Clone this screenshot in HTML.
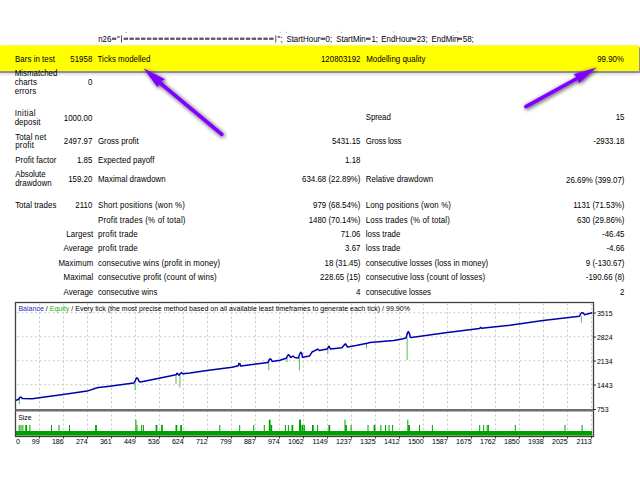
<!DOCTYPE html>
<html><head><meta charset="utf-8"><style>
html,body{margin:0;padding:0;background:#fff;width:640px;height:480px;overflow:hidden}
svg{position:absolute;left:0;top:0;font-family:"Liberation Sans",sans-serif}
</style></head><body>
<svg width="640" height="480" viewBox="0 0 640 480">
<defs>
<filter id="ysh" x="-5%" y="-50%" width="110%" height="200%"><feGaussianBlur in="SourceAlpha" stdDeviation="2" result="b1"/><feOffset in="b1" dx="0.5" dy="1.5" result="o1"/><feComponentTransfer in="o1" result="s1"><feFuncA type="linear" slope="0.3"/></feComponentTransfer><feGaussianBlur in="SourceAlpha" stdDeviation="0.5" result="b2"/><feOffset in="b2" dx="0.9" dy="1.7" result="o2"/><feFlood flood-color="#8e8e9c"/><feComposite in2="o2" operator="in" result="s2"/><feMerge><feMergeNode in="s1"/><feMergeNode in="s2"/><feMergeNode in="SourceGraphic"/></feMerge></filter>
<filter id="sh" x="-50%" y="-50%" width="200%" height="200%"><feGaussianBlur in="SourceAlpha" stdDeviation="2.1"/><feOffset dx="0.6" dy="1.4"/><feComponentTransfer><feFuncA type="linear" slope="0.8"/></feComponentTransfer><feMerge><feMergeNode/><feMergeNode in="SourceGraphic"/></feMerge></filter>
</defs>
<rect x="-2" y="45.4" width="641" height="25.6" fill="#ffff00" filter="url(#ysh)"/>
<rect x="111.90" y="37.6" width="4.40" height="2.3" fill="#5a5a5a"/><rect x="320.60" y="37.6" width="4.70" height="2.3" fill="#5a5a5a"/><rect x="366.00" y="37.6" width="4.60" height="2.3" fill="#5a5a5a"/><rect x="412.00" y="37.6" width="4.25" height="2.3" fill="#5a5a5a"/><rect x="457.30" y="37.6" width="4.70" height="2.3" fill="#5a5a5a"/><rect x="123.65" y="37.6" width="4.40" height="2.3" fill="#5a5a5a"/><rect x="129.47" y="37.6" width="4.40" height="2.3" fill="#5a5a5a"/><rect x="135.29" y="37.6" width="4.40" height="2.3" fill="#5a5a5a"/><rect x="141.11" y="37.6" width="4.40" height="2.3" fill="#5a5a5a"/><rect x="146.93" y="37.6" width="4.40" height="2.3" fill="#5a5a5a"/><rect x="152.75" y="37.6" width="4.40" height="2.3" fill="#5a5a5a"/><rect x="158.57" y="37.6" width="4.40" height="2.3" fill="#5a5a5a"/><rect x="164.39" y="37.6" width="4.40" height="2.3" fill="#5a5a5a"/><rect x="170.21" y="37.6" width="4.40" height="2.3" fill="#5a5a5a"/><rect x="176.03" y="37.6" width="4.40" height="2.3" fill="#5a5a5a"/><rect x="181.85" y="37.6" width="4.40" height="2.3" fill="#5a5a5a"/><rect x="187.67" y="37.6" width="4.40" height="2.3" fill="#5a5a5a"/><rect x="193.49" y="37.6" width="4.40" height="2.3" fill="#5a5a5a"/><rect x="199.31" y="37.6" width="4.40" height="2.3" fill="#5a5a5a"/><rect x="205.13" y="37.6" width="4.40" height="2.3" fill="#5a5a5a"/><rect x="210.95" y="37.6" width="4.40" height="2.3" fill="#5a5a5a"/><rect x="216.77" y="37.6" width="4.40" height="2.3" fill="#5a5a5a"/><rect x="222.59" y="37.6" width="4.40" height="2.3" fill="#5a5a5a"/><rect x="228.41" y="37.6" width="4.40" height="2.3" fill="#5a5a5a"/><rect x="234.23" y="37.6" width="4.40" height="2.3" fill="#5a5a5a"/><rect x="240.05" y="37.6" width="4.40" height="2.3" fill="#5a5a5a"/><rect x="245.87" y="37.6" width="4.40" height="2.3" fill="#5a5a5a"/><rect x="251.69" y="37.6" width="4.40" height="2.3" fill="#5a5a5a"/><rect x="257.51" y="37.6" width="4.40" height="2.3" fill="#5a5a5a"/><rect x="263.33" y="37.6" width="4.40" height="2.3" fill="#5a5a5a"/><rect x="269.15" y="37.6" width="4.40" height="2.3" fill="#5a5a5a"/><rect x="121" y="35.3" width="1" height="7.2" fill="#555"/><rect x="275.3" y="35.3" width="1" height="7.2" fill="#555"/>
<g fill="#667" opacity="0.75"><rect x="125.5" y="32" width="1" height="1"/><rect x="279.6" y="31.8" width="1" height="1"/><rect x="285.9" y="31.8" width="1" height="1"/><rect x="341" y="31.8" width="1" height="1"/><rect x="393" y="31.5" width="1" height="1"/><rect x="457" y="31.5" width="1" height="1"/></g>
<g transform="scale(0.92 1)" stroke="none">
<text x="106.74" y="41.6" font-size="8.6" fill="#000">n26</text>
<text x="127.17" y="41.6" font-size="8.6" fill="#000">"</text>
<text x="301.74" y="41.6" font-size="8.6" fill="#000">";</text>
<text x="311.3" y="41.6" font-size="8.6" fill="#000">StartHour</text>
<text x="353.91" y="41.6" font-size="8.6" fill="#000">0;</text>
<text x="365.49" y="41.6" font-size="8.6" fill="#000">StartMin</text>
<text x="403.8" y="41.6" font-size="8.6" fill="#000">1;</text>
<text x="414.4" y="41.6" font-size="8.6" fill="#000">EndHour</text>
<text x="452.93" y="41.6" font-size="8.6" fill="#000">23;</text>
<text x="469.13" y="41.6" font-size="8.6" fill="#000">EndMin</text>
<text x="503.04" y="41.6" font-size="8.6" fill="#000">58;</text>
</g>
<g transform="scale(0.92 1)" stroke="none">
<text x="16.36" y="62.0" font-size="8.6" fill="#000" textLength="43.37" lengthAdjust="spacing">Bars in test</text>
<text x="100.33" y="62.0" text-anchor="end" font-size="8.6" fill="#000">51958</text>
<text x="106.03" y="62.0" font-size="8.6" fill="#000" textLength="57.50" lengthAdjust="spacing">Ticks modelled</text>
<text x="391.85" y="62.0" text-anchor="end" font-size="8.6" fill="#000">120803192</text>
<text x="397.99" y="62.0" font-size="8.6" fill="#000" textLength="64.46" lengthAdjust="spacing">Modelling quality</text>
<text x="678.26" y="62.0" text-anchor="end" font-size="8.6" fill="#000">99.90%</text>
<text x="15.92" y="76.0" font-size="8.6" fill="#000" textLength="46.52" lengthAdjust="spacing">Mismatched</text>
<text x="15.92" y="84.9" font-size="8.6" fill="#000" textLength="24.13" lengthAdjust="spacing">charts</text>
<text x="15.92" y="94.3" font-size="8.6" fill="#000" textLength="23.42" lengthAdjust="spacing">errors</text>
<text x="100.33" y="84.8" text-anchor="end" font-size="8.6" fill="#000">0</text>
<text x="15.92" y="116.1" font-size="8.6" fill="#000" textLength="22.72" lengthAdjust="spacing">Initial</text>
<text x="15.92" y="125.2" font-size="8.6" fill="#000" textLength="28.15" lengthAdjust="spacing">deposit</text>
<text x="100.33" y="120.7" text-anchor="end" font-size="8.6" fill="#000">1000.00</text>
<text x="397.55" y="120.0" font-size="8.6" fill="#000" textLength="27.28" lengthAdjust="spacing">Spread</text>
<text x="678.8" y="120.5" text-anchor="end" font-size="8.6" fill="#000">15</text>
<text x="16.47" y="139.75" font-size="8.6" fill="#000" textLength="33.70" lengthAdjust="spacing">Total net</text>
<text x="16.47" y="148.5" font-size="8.6" fill="#000" textLength="20.43" lengthAdjust="spacing">profit</text>
<text x="100.33" y="144.0" text-anchor="end" font-size="8.6" fill="#000">2497.97</text>
<text x="106.47" y="144.0" font-size="8.6" fill="#000" textLength="44.35" lengthAdjust="spacing">Gross profit</text>
<text x="391.85" y="144.0" text-anchor="end" font-size="8.6" fill="#000">5431.15</text>
<text x="397.55" y="144.0" font-size="8.6" fill="#000" textLength="38.91" lengthAdjust="spacing">Gross loss</text>
<text x="678.8" y="144.25" text-anchor="end" font-size="8.6" fill="#000">-2933.18</text>
<text x="16.47" y="163.0" font-size="8.6" fill="#000" textLength="44.78" lengthAdjust="spacing">Profit factor</text>
<text x="100.33" y="163.0" text-anchor="end" font-size="8.6" fill="#000">1.85</text>
<text x="106.47" y="163.0" font-size="8.6" fill="#000" textLength="61.30" lengthAdjust="spacing">Expected payoff</text>
<text x="391.85" y="163.0" text-anchor="end" font-size="8.6" fill="#000">1.18</text>
<text x="16.47" y="177.25" font-size="8.6" fill="#000" textLength="33.15" lengthAdjust="spacing">Absolute</text>
<text x="16.47" y="186.0" font-size="8.6" fill="#000" textLength="39.57" lengthAdjust="spacing">drawdown</text>
<text x="100.33" y="182.25" text-anchor="end" font-size="8.6" fill="#000">159.20</text>
<text x="106.47" y="182.25" font-size="8.6" fill="#000" textLength="73.59" lengthAdjust="spacing">Maximal drawdown</text>
<text x="391.85" y="182.25" text-anchor="end" font-size="8.6" fill="#000">634.68 (22.89%)</text>
<text x="397.55" y="182.25" font-size="8.6" fill="#000" textLength="73.15" lengthAdjust="spacing">Relative drawdown</text>
<text x="678.8" y="182.7" text-anchor="end" font-size="8.6" fill="#000">26.69% (399.07)</text>
<text x="16.47" y="208.25" font-size="8.6" fill="#000" textLength="44.78" lengthAdjust="spacing">Total trades</text>
<text x="100.33" y="208.25" text-anchor="end" font-size="8.6" fill="#000">2110</text>
<text x="106.47" y="208.25" font-size="8.6" fill="#000" textLength="94.46" lengthAdjust="spacing">Short positions (won %)</text>
<text x="391.85" y="208.25" text-anchor="end" font-size="8.6" fill="#000">979 (68.54%)</text>
<text x="397.55" y="208.25" font-size="8.6" fill="#000" textLength="92.61" lengthAdjust="spacing">Long positions (won %)</text>
<text x="678.8" y="208.25" text-anchor="end" font-size="8.6" fill="#000">1131 (71.53%)</text>
<text x="106.47" y="222.75" font-size="8.6" fill="#000" textLength="95.11" lengthAdjust="spacing">Profit trades (% of total)</text>
<text x="391.85" y="222.75" text-anchor="end" font-size="8.6" fill="#000">1480 (70.14%)</text>
<text x="397.55" y="222.75" font-size="8.6" fill="#000" textLength="91.41" lengthAdjust="spacing">Loss trades (% of total)</text>
<text x="678.8" y="222.75" text-anchor="end" font-size="8.6" fill="#000">630 (29.86%)</text>
<text x="101.36" y="237.25" text-anchor="end" font-size="8.6" fill="#000" textLength="29.46" lengthAdjust="spacing">Largest</text>
<text x="106.47" y="237.25" font-size="8.6" fill="#000" textLength="43.26" lengthAdjust="spacing">profit trade</text>
<text x="391.85" y="237.25" text-anchor="end" font-size="8.6" fill="#000">71.06</text>
<text x="397.55" y="237.25" font-size="8.6" fill="#000" textLength="37.72" lengthAdjust="spacing">loss trade</text>
<text x="678.8" y="237.25" text-anchor="end" font-size="8.6" fill="#000">-46.45</text>
<text x="101.36" y="251.5" text-anchor="end" font-size="8.6" fill="#000" textLength="32.28" lengthAdjust="spacing">Average</text>
<text x="106.47" y="251.5" font-size="8.6" fill="#000" textLength="43.26" lengthAdjust="spacing">profit trade</text>
<text x="391.85" y="251.5" text-anchor="end" font-size="8.6" fill="#000">3.67</text>
<text x="397.55" y="251.5" font-size="8.6" fill="#000" textLength="37.72" lengthAdjust="spacing">loss trade</text>
<text x="678.8" y="251.5" text-anchor="end" font-size="8.6" fill="#000">-4.66</text>
<text x="101.36" y="266.0" text-anchor="end" font-size="8.6" fill="#000" textLength="37.83" lengthAdjust="spacing">Maximum</text>
<text x="106.47" y="266.0" font-size="8.6" fill="#000" textLength="132.83" lengthAdjust="spacing">consecutive wins (profit in money)</text>
<text x="391.85" y="266.0" text-anchor="end" font-size="8.6" fill="#000">18 (31.45)</text>
<text x="397.55" y="266.0" font-size="8.6" fill="#000" textLength="133.15" lengthAdjust="spacing">consecutive losses (loss in money)</text>
<text x="678.8" y="266.0" text-anchor="end" font-size="8.6" fill="#000">9 (-130.67)</text>
<text x="101.36" y="280.25" text-anchor="end" font-size="8.6" fill="#000" textLength="32.28" lengthAdjust="spacing">Maximal</text>
<text x="106.47" y="280.25" font-size="8.6" fill="#000" textLength="129.02" lengthAdjust="spacing">consecutive profit (count of wins)</text>
<text x="391.85" y="280.25" text-anchor="end" font-size="8.6" fill="#000">228.65 (15)</text>
<text x="397.55" y="280.25" font-size="8.6" fill="#000" textLength="129.78" lengthAdjust="spacing">consecutive loss (count of losses)</text>
<text x="678.8" y="280.25" text-anchor="end" font-size="8.6" fill="#000">-190.66 (8)</text>
<text x="101.36" y="294.75" text-anchor="end" font-size="8.6" fill="#000" textLength="32.28" lengthAdjust="spacing">Average</text>
<text x="106.47" y="294.75" font-size="8.6" fill="#000" textLength="64.57" lengthAdjust="spacing">consecutive wins</text>
<text x="391.85" y="294.75" text-anchor="end" font-size="8.6" fill="#000">4</text>
<text x="397.55" y="294.75" font-size="8.6" fill="#000" textLength="70.98" lengthAdjust="spacing">consecutive losses</text>
<text x="678.8" y="294.75" text-anchor="end" font-size="8.6" fill="#000">2</text>
</g>
<line x1="39.5" y1="303.5" x2="39.5" y2="436.5" stroke="#cbcbcb" stroke-width="1" stroke-dasharray="2.1 2.35" stroke-dashoffset="0.25"/>
<line x1="63.5" y1="303.5" x2="63.5" y2="436.5" stroke="#cbcbcb" stroke-width="1" stroke-dasharray="2.1 2.35" stroke-dashoffset="0.25"/>
<line x1="87.5" y1="303.5" x2="87.5" y2="436.5" stroke="#cbcbcb" stroke-width="1" stroke-dasharray="2.1 2.35" stroke-dashoffset="0.25"/>
<line x1="111.5" y1="303.5" x2="111.5" y2="436.5" stroke="#cbcbcb" stroke-width="1" stroke-dasharray="2.1 2.35" stroke-dashoffset="0.25"/>
<line x1="135.5" y1="303.5" x2="135.5" y2="436.5" stroke="#cbcbcb" stroke-width="1" stroke-dasharray="2.1 2.35" stroke-dashoffset="0.25"/>
<line x1="159.5" y1="303.5" x2="159.5" y2="436.5" stroke="#cbcbcb" stroke-width="1" stroke-dasharray="2.1 2.35" stroke-dashoffset="0.25"/>
<line x1="183.5" y1="303.5" x2="183.5" y2="436.5" stroke="#cbcbcb" stroke-width="1" stroke-dasharray="2.1 2.35" stroke-dashoffset="0.25"/>
<line x1="207.5" y1="303.5" x2="207.5" y2="436.5" stroke="#cbcbcb" stroke-width="1" stroke-dasharray="2.1 2.35" stroke-dashoffset="0.25"/>
<line x1="231.5" y1="303.5" x2="231.5" y2="436.5" stroke="#cbcbcb" stroke-width="1" stroke-dasharray="2.1 2.35" stroke-dashoffset="0.25"/>
<line x1="255.5" y1="303.5" x2="255.5" y2="436.5" stroke="#cbcbcb" stroke-width="1" stroke-dasharray="2.1 2.35" stroke-dashoffset="0.25"/>
<line x1="279.5" y1="303.5" x2="279.5" y2="436.5" stroke="#cbcbcb" stroke-width="1" stroke-dasharray="2.1 2.35" stroke-dashoffset="0.25"/>
<line x1="303.5" y1="303.5" x2="303.5" y2="436.5" stroke="#cbcbcb" stroke-width="1" stroke-dasharray="2.1 2.35" stroke-dashoffset="0.25"/>
<line x1="327.5" y1="303.5" x2="327.5" y2="436.5" stroke="#cbcbcb" stroke-width="1" stroke-dasharray="2.1 2.35" stroke-dashoffset="0.25"/>
<line x1="351.5" y1="303.5" x2="351.5" y2="436.5" stroke="#cbcbcb" stroke-width="1" stroke-dasharray="2.1 2.35" stroke-dashoffset="0.25"/>
<line x1="375.5" y1="303.5" x2="375.5" y2="436.5" stroke="#cbcbcb" stroke-width="1" stroke-dasharray="2.1 2.35" stroke-dashoffset="0.25"/>
<line x1="399.5" y1="303.5" x2="399.5" y2="436.5" stroke="#cbcbcb" stroke-width="1" stroke-dasharray="2.1 2.35" stroke-dashoffset="0.25"/>
<line x1="423.5" y1="303.5" x2="423.5" y2="436.5" stroke="#cbcbcb" stroke-width="1" stroke-dasharray="2.1 2.35" stroke-dashoffset="0.25"/>
<line x1="447.5" y1="303.5" x2="447.5" y2="436.5" stroke="#cbcbcb" stroke-width="1" stroke-dasharray="2.1 2.35" stroke-dashoffset="0.25"/>
<line x1="471.5" y1="303.5" x2="471.5" y2="436.5" stroke="#cbcbcb" stroke-width="1" stroke-dasharray="2.1 2.35" stroke-dashoffset="0.25"/>
<line x1="495.5" y1="303.5" x2="495.5" y2="436.5" stroke="#cbcbcb" stroke-width="1" stroke-dasharray="2.1 2.35" stroke-dashoffset="0.25"/>
<line x1="519.5" y1="303.5" x2="519.5" y2="436.5" stroke="#cbcbcb" stroke-width="1" stroke-dasharray="2.1 2.35" stroke-dashoffset="0.25"/>
<line x1="543.5" y1="303.5" x2="543.5" y2="436.5" stroke="#cbcbcb" stroke-width="1" stroke-dasharray="2.1 2.35" stroke-dashoffset="0.25"/>
<line x1="567.5" y1="303.5" x2="567.5" y2="436.5" stroke="#cbcbcb" stroke-width="1" stroke-dasharray="2.1 2.35" stroke-dashoffset="0.25"/>
<line x1="591.5" y1="303.5" x2="591.5" y2="436.5" stroke="#cbcbcb" stroke-width="1" stroke-dasharray="2.1 2.35" stroke-dashoffset="0.25"/>
<line x1="15.5" y1="312.8" x2="593.5" y2="312.8" stroke="#cbcbcb" stroke-width="1" stroke-dasharray="2.1 2.35" stroke-dashoffset="2.8"/>
<line x1="15.5" y1="336.8" x2="593.5" y2="336.8" stroke="#cbcbcb" stroke-width="1" stroke-dasharray="2.1 2.35" stroke-dashoffset="2.8"/>
<line x1="15.5" y1="360.8" x2="593.5" y2="360.8" stroke="#cbcbcb" stroke-width="1" stroke-dasharray="2.1 2.35" stroke-dashoffset="2.8"/>
<line x1="15.5" y1="384.7" x2="593.5" y2="384.7" stroke="#cbcbcb" stroke-width="1" stroke-dasharray="2.1 2.35" stroke-dashoffset="2.8"/>
<text x="19.31" y="311.1" font-size="7.4" transform="scale(0.953 1)"><tspan fill="#2828c8">Balance</tspan><tspan fill="#000"> / </tspan><tspan fill="#20b020">Equity</tspan><tspan fill="#000"> / Every tick (the most precise method based on all available least timeframes to generate each tick) / 99.90%</tspan></text>
<text x="20.68" y="419.9" font-size="7.8" fill="#000" transform="scale(0.88 1)">Size</text>
<line x1="19.3" y1="398" x2="19.3" y2="404.5" stroke="#50c050" stroke-width="1"/>
<line x1="135.2" y1="383" x2="135.2" y2="390.3" stroke="#50c050" stroke-width="1"/>
<line x1="176" y1="375" x2="176" y2="384" stroke="#50c050" stroke-width="1"/>
<line x1="179.9" y1="375" x2="179.9" y2="387.5" stroke="#50c050" stroke-width="1"/>
<line x1="268.8" y1="362" x2="268.8" y2="370.3" stroke="#50c050" stroke-width="1"/>
<line x1="287" y1="358" x2="287" y2="362.4" stroke="#50c050" stroke-width="1"/>
<line x1="299.4" y1="357" x2="299.4" y2="370.5" stroke="#50c050" stroke-width="1"/>
<line x1="312.6" y1="351" x2="312.6" y2="352.8" stroke="#50c050" stroke-width="1"/>
<line x1="327.8" y1="349" x2="327.8" y2="354" stroke="#50c050" stroke-width="1"/>
<line x1="366.5" y1="343.5" x2="366.5" y2="348.4" stroke="#50c050" stroke-width="1"/>
<line x1="407.1" y1="338" x2="407.1" y2="359.8" stroke="#50c050" stroke-width="1"/>
<line x1="581.4" y1="316" x2="581.4" y2="322.6" stroke="#50c050" stroke-width="1"/>
<polyline points="16,400.2 18.5,399.5 19.8,397.3 21,397.2 22.5,398.6 32.3,398.8 39.3,397.8 63.2,394.6 87.1,391.1 95.6,388.3 98.4,387.6 107.7,386.4 133.75,383 135,381.5 136.3,377.9 137.6,378.2 139.3,381.6 140.5,381.9 164,377.3 176,374.8 177,373.2 178.8,375.1 181.3,372.7 183,373.8 190,373.1 206.9,370.6 232.2,367.2 238.3,365.8 238.8,363.6 240,363.8 240.6,366.1 244.9,365.4 256.1,364 268,362.6 269.3,359.6 270.2,358.8 271.3,359.6 272.3,361.6 280,360.2 286.3,358.2 287.5,356 288.4,354.7 289.5,355.5 290.5,357.5 293,356.1 294.8,357.5 298.3,358 299.5,354.5 300.8,352.2 301.8,353.5 302.5,357.2 309.5,356.1 312.1,351.9 314.5,350.75 317.7,349.1 319.4,350.5 327.1,349.1 328.9,346.25 330.6,349.1 341.9,347.7 345.4,343.7 347.5,347 356,345.5 367.2,343.2 370,342.5 393.7,340.6 403.1,338.7 406.3,337.8 407.2,333.5 408.3,331.6 409.3,333 410.3,337.3 411.3,337.6 447.5,332.6 479.5,328.5 480.5,327.4 481.5,328.3 510,325.2 543,320.6 579.5,316.3 580.8,313.5 582,312.6 583.5,313.2 584.5,314.8 592.2,312.8" fill="none" stroke="#0000b0" stroke-width="1.5" stroke-linejoin="round"/>
<line x1="19.2" y1="424.9" x2="19.2" y2="431" stroke="#00a000" stroke-width="1"/>
<line x1="21" y1="424.9" x2="21" y2="431" stroke="#00a000" stroke-width="1"/>
<line x1="22.9" y1="424.9" x2="22.9" y2="431" stroke="#00a000" stroke-width="1"/>
<line x1="26.2" y1="424.9" x2="26.2" y2="431" stroke="#00a000" stroke-width="1.8"/>
<line x1="29.9" y1="424.9" x2="29.9" y2="431" stroke="#00a000" stroke-width="1"/>
<line x1="51.5" y1="424.9" x2="51.5" y2="431" stroke="#00a000" stroke-width="1"/>
<line x1="59" y1="424.9" x2="59" y2="431" stroke="#00a000" stroke-width="1"/>
<line x1="69.5" y1="424.9" x2="69.5" y2="431" stroke="#00a000" stroke-width="1"/>
<line x1="96" y1="424.9" x2="96" y2="431" stroke="#00a000" stroke-width="1.8"/>
<line x1="135.9" y1="419.7" x2="135.9" y2="431" stroke="#00a000" stroke-width="1"/>
<line x1="137" y1="424.9" x2="137" y2="431" stroke="#00a000" stroke-width="1"/>
<line x1="141.7" y1="424.9" x2="141.7" y2="431" stroke="#00a000" stroke-width="1"/>
<line x1="143.4" y1="424.9" x2="143.4" y2="431" stroke="#00a000" stroke-width="1"/>
<line x1="156.5" y1="424.9" x2="156.5" y2="431" stroke="#00a000" stroke-width="1.8"/>
<line x1="161.6" y1="424.9" x2="161.6" y2="431" stroke="#00a000" stroke-width="1"/>
<line x1="162.3" y1="424.9" x2="162.3" y2="431" stroke="#00a000" stroke-width="1"/>
<line x1="176.4" y1="424.9" x2="176.4" y2="431" stroke="#00a000" stroke-width="1.8"/>
<line x1="181.1" y1="424.9" x2="181.1" y2="431" stroke="#00a000" stroke-width="1.8"/>
<line x1="219.8" y1="424.9" x2="219.8" y2="431" stroke="#00a000" stroke-width="1"/>
<line x1="239.7" y1="424.9" x2="239.7" y2="431" stroke="#00a000" stroke-width="1"/>
<line x1="253.7" y1="424.9" x2="253.7" y2="431" stroke="#00a000" stroke-width="1"/>
<line x1="264.3" y1="424.9" x2="264.3" y2="431" stroke="#00a000" stroke-width="1"/>
<line x1="269.7" y1="419.7" x2="269.7" y2="431" stroke="#00a000" stroke-width="1.8"/>
<line x1="271.3" y1="424.9" x2="271.3" y2="431" stroke="#00a000" stroke-width="1.8"/>
<line x1="285.4" y1="424.9" x2="285.4" y2="431" stroke="#00a000" stroke-width="1"/>
<line x1="288.4" y1="424.9" x2="288.4" y2="431" stroke="#00a000" stroke-width="1"/>
<line x1="292.4" y1="424.9" x2="292.4" y2="431" stroke="#00a000" stroke-width="1.8"/>
<line x1="299.9" y1="419.7" x2="299.9" y2="431" stroke="#00a000" stroke-width="1.8"/>
<line x1="302.5" y1="424.9" x2="302.5" y2="431" stroke="#00a000" stroke-width="1"/>
<line x1="304.1" y1="424.9" x2="304.1" y2="431" stroke="#00a000" stroke-width="1"/>
<line x1="300.5" y1="419.7" x2="300.5" y2="431" stroke="#00a000" stroke-width="1"/>
<line x1="301.9" y1="424.9" x2="301.9" y2="431" stroke="#00a000" stroke-width="1"/>
<line x1="304.2" y1="424.9" x2="304.2" y2="431" stroke="#00a000" stroke-width="1"/>
<line x1="312.9" y1="424.9" x2="312.9" y2="431" stroke="#00a000" stroke-width="1.8"/>
<line x1="317.6" y1="424.9" x2="317.6" y2="431" stroke="#00a000" stroke-width="1"/>
<line x1="329.3" y1="424.9" x2="329.3" y2="431" stroke="#00a000" stroke-width="1.8"/>
<line x1="345" y1="419.7" x2="345" y2="431" stroke="#00a000" stroke-width="1"/>
<line x1="346" y1="424.9" x2="346" y2="431" stroke="#00a000" stroke-width="1.8"/>
<line x1="351.1" y1="424.9" x2="351.1" y2="431" stroke="#00a000" stroke-width="1"/>
<line x1="368" y1="424.9" x2="368" y2="431" stroke="#00a000" stroke-width="1"/>
<line x1="374.5" y1="424.9" x2="374.5" y2="431" stroke="#00a000" stroke-width="1.8"/>
<line x1="380.9" y1="424.9" x2="380.9" y2="431" stroke="#00a000" stroke-width="1"/>
<line x1="385.5" y1="424.9" x2="385.5" y2="431" stroke="#00a000" stroke-width="1"/>
<line x1="389" y1="424.9" x2="389" y2="431" stroke="#00a000" stroke-width="1"/>
<line x1="392.6" y1="424.9" x2="392.6" y2="431" stroke="#00a000" stroke-width="1"/>
<line x1="407.8" y1="419.7" x2="407.8" y2="431" stroke="#00a000" stroke-width="1"/>
<line x1="409" y1="424.9" x2="409" y2="431" stroke="#00a000" stroke-width="1.8"/>
<line x1="419.5" y1="424.9" x2="419.5" y2="431" stroke="#00a000" stroke-width="1"/>
<line x1="432.4" y1="424.9" x2="432.4" y2="431" stroke="#00a000" stroke-width="1"/>
<line x1="479.7" y1="424.9" x2="479.7" y2="431" stroke="#00a000" stroke-width="1"/>
<line x1="483.7" y1="424.9" x2="483.7" y2="431" stroke="#00a000" stroke-width="1"/>
<line x1="487.2" y1="424.9" x2="487.2" y2="431" stroke="#00a000" stroke-width="1"/>
<line x1="488.4" y1="424.9" x2="488.4" y2="431" stroke="#00a000" stroke-width="1"/>
<line x1="515.3" y1="424.9" x2="515.3" y2="431" stroke="#00a000" stroke-width="1"/>
<line x1="565" y1="424.9" x2="565" y2="431" stroke="#00a000" stroke-width="1"/>
<line x1="582.1" y1="424.9" x2="582.1" y2="431" stroke="#00a000" stroke-width="1"/>
<rect x="16.0" y="431" width="576.2" height="4.6" fill="#00a000"/>
<rect x="15.5" y="302.5" width="578.0" height="134.0" fill="none" stroke="#404040" stroke-width="1.3"/>
<line x1="15.5" y1="410.3" x2="593.5" y2="410.3" stroke="#6e6e6e" stroke-width="2.6"/>
<line x1="593.5" y1="313" x2="596.0" y2="313" stroke="#303030" stroke-width="1"/>
<text x="648.91" y="315.8" font-size="7.6" fill="#000" transform="scale(0.92 1)">3515</text>
<line x1="593.5" y1="337" x2="596.0" y2="337" stroke="#303030" stroke-width="1"/>
<text x="648.91" y="339.8" font-size="7.6" fill="#000" transform="scale(0.92 1)">2824</text>
<line x1="593.5" y1="361" x2="596.0" y2="361" stroke="#303030" stroke-width="1"/>
<text x="648.91" y="363.8" font-size="7.6" fill="#000" transform="scale(0.92 1)">2134</text>
<line x1="593.5" y1="385" x2="596.0" y2="385" stroke="#303030" stroke-width="1"/>
<text x="648.91" y="387.8" font-size="7.6" fill="#000" transform="scale(0.92 1)">1443</text>
<line x1="593.5" y1="409.5" x2="596.0" y2="409.5" stroke="#303030" stroke-width="1"/>
<text x="648.91" y="412.3" font-size="7.6" fill="#000" transform="scale(0.92 1)">753</text>
<text x="17.02" y="444.1" font-size="7.6" fill="#000" transform="scale(0.94 1)">0</text>
<line x1="39.5" y1="436.5" x2="39.5" y2="438.5" stroke="#303030" stroke-width="1"/>
<text x="42.34" y="444.1" text-anchor="end" font-size="7.6" fill="#000" transform="scale(0.94 1)">99</text>
<line x1="63.5" y1="436.5" x2="63.5" y2="438.5" stroke="#303030" stroke-width="1"/>
<text x="67.87" y="444.1" text-anchor="end" font-size="7.6" fill="#000" transform="scale(0.94 1)">186</text>
<line x1="87.5" y1="436.5" x2="87.5" y2="438.5" stroke="#303030" stroke-width="1"/>
<text x="93.40" y="444.1" text-anchor="end" font-size="7.6" fill="#000" transform="scale(0.94 1)">274</text>
<line x1="111.5" y1="436.5" x2="111.5" y2="438.5" stroke="#303030" stroke-width="1"/>
<text x="118.94" y="444.1" text-anchor="end" font-size="7.6" fill="#000" transform="scale(0.94 1)">361</text>
<line x1="135.5" y1="436.5" x2="135.5" y2="438.5" stroke="#303030" stroke-width="1"/>
<text x="144.47" y="444.1" text-anchor="end" font-size="7.6" fill="#000" transform="scale(0.94 1)">449</text>
<line x1="159.5" y1="436.5" x2="159.5" y2="438.5" stroke="#303030" stroke-width="1"/>
<text x="170.00" y="444.1" text-anchor="end" font-size="7.6" fill="#000" transform="scale(0.94 1)">536</text>
<line x1="183.5" y1="436.5" x2="183.5" y2="438.5" stroke="#303030" stroke-width="1"/>
<text x="195.53" y="444.1" text-anchor="end" font-size="7.6" fill="#000" transform="scale(0.94 1)">624</text>
<line x1="207.5" y1="436.5" x2="207.5" y2="438.5" stroke="#303030" stroke-width="1"/>
<text x="221.06" y="444.1" text-anchor="end" font-size="7.6" fill="#000" transform="scale(0.94 1)">712</text>
<line x1="231.5" y1="436.5" x2="231.5" y2="438.5" stroke="#303030" stroke-width="1"/>
<text x="246.60" y="444.1" text-anchor="end" font-size="7.6" fill="#000" transform="scale(0.94 1)">799</text>
<line x1="255.5" y1="436.5" x2="255.5" y2="438.5" stroke="#303030" stroke-width="1"/>
<text x="272.13" y="444.1" text-anchor="end" font-size="7.6" fill="#000" transform="scale(0.94 1)">887</text>
<line x1="279.5" y1="436.5" x2="279.5" y2="438.5" stroke="#303030" stroke-width="1"/>
<text x="297.66" y="444.1" text-anchor="end" font-size="7.6" fill="#000" transform="scale(0.94 1)">974</text>
<line x1="303.5" y1="436.5" x2="303.5" y2="438.5" stroke="#303030" stroke-width="1"/>
<text x="323.19" y="444.1" text-anchor="end" font-size="7.6" fill="#000" transform="scale(0.94 1)">1062</text>
<line x1="327.5" y1="436.5" x2="327.5" y2="438.5" stroke="#303030" stroke-width="1"/>
<text x="348.72" y="444.1" text-anchor="end" font-size="7.6" fill="#000" transform="scale(0.94 1)">1149</text>
<line x1="351.5" y1="436.5" x2="351.5" y2="438.5" stroke="#303030" stroke-width="1"/>
<text x="374.26" y="444.1" text-anchor="end" font-size="7.6" fill="#000" transform="scale(0.94 1)">1237</text>
<line x1="375.5" y1="436.5" x2="375.5" y2="438.5" stroke="#303030" stroke-width="1"/>
<text x="399.79" y="444.1" text-anchor="end" font-size="7.6" fill="#000" transform="scale(0.94 1)">1325</text>
<line x1="399.5" y1="436.5" x2="399.5" y2="438.5" stroke="#303030" stroke-width="1"/>
<text x="425.32" y="444.1" text-anchor="end" font-size="7.6" fill="#000" transform="scale(0.94 1)">1412</text>
<line x1="423.5" y1="436.5" x2="423.5" y2="438.5" stroke="#303030" stroke-width="1"/>
<text x="450.85" y="444.1" text-anchor="end" font-size="7.6" fill="#000" transform="scale(0.94 1)">1500</text>
<line x1="447.5" y1="436.5" x2="447.5" y2="438.5" stroke="#303030" stroke-width="1"/>
<text x="476.38" y="444.1" text-anchor="end" font-size="7.6" fill="#000" transform="scale(0.94 1)">1587</text>
<line x1="471.5" y1="436.5" x2="471.5" y2="438.5" stroke="#303030" stroke-width="1"/>
<text x="501.91" y="444.1" text-anchor="end" font-size="7.6" fill="#000" transform="scale(0.94 1)">1675</text>
<line x1="495.5" y1="436.5" x2="495.5" y2="438.5" stroke="#303030" stroke-width="1"/>
<text x="527.45" y="444.1" text-anchor="end" font-size="7.6" fill="#000" transform="scale(0.94 1)">1762</text>
<line x1="519.5" y1="436.5" x2="519.5" y2="438.5" stroke="#303030" stroke-width="1"/>
<text x="552.98" y="444.1" text-anchor="end" font-size="7.6" fill="#000" transform="scale(0.94 1)">1850</text>
<line x1="543.5" y1="436.5" x2="543.5" y2="438.5" stroke="#303030" stroke-width="1"/>
<text x="578.51" y="444.1" text-anchor="end" font-size="7.6" fill="#000" transform="scale(0.94 1)">1938</text>
<line x1="567.5" y1="436.5" x2="567.5" y2="438.5" stroke="#303030" stroke-width="1"/>
<text x="604.04" y="444.1" text-anchor="end" font-size="7.6" fill="#000" transform="scale(0.94 1)">2025</text>
<line x1="591.5" y1="436.5" x2="591.5" y2="438.5" stroke="#303030" stroke-width="1"/>
<text x="629.57" y="444.1" text-anchor="end" font-size="7.6" fill="#000" transform="scale(0.94 1)">2113</text>
<g filter="url(#sh)"><polygon points="143.5,68.2 165,79.25 160.5,81.5 157.5,87.3" fill="#8000ff"/><line x1="158.5" y1="81.6" x2="221.8" y2="134.3" stroke="#8000ff" stroke-width="3.7" stroke-linecap="round"/></g><g filter="url(#sh)"><polygon points="596.6,67.6 578.75,83.3 577.5,78.2 573.6,74.2" fill="#8000ff"/><line x1="581.5" y1="76" x2="525.9" y2="106.6" stroke="#8000ff" stroke-width="3.7" stroke-linecap="round"/></g>
</svg>
</body></html>
